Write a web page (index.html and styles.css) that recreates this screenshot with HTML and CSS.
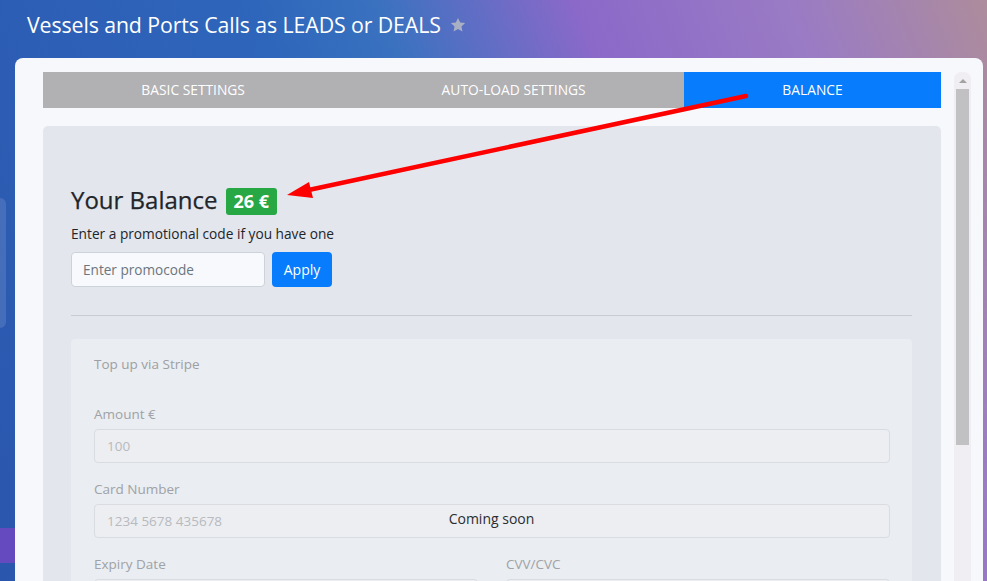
FILE: index.html
```html
<!DOCTYPE html>
<html lang="en">
<head>
<meta charset="utf-8">
<title>Balance</title>
<link rel="stylesheet" href="styles.css">
</head>
<body>
<div class="deco deco-box"></div>
<div class="deco deco-bar"></div>
<header class="page-head">
  <h1 class="page-title">Vessels and Ports Calls as LEADS or DEALS</h1>
  <svg class="star" width="18" height="18" viewBox="0 0 24 24"><path d="M12 2.5l2.9 6.1 6.6.8-4.9 4.6 1.3 6.6L12 17.3l-5.9 3.3 1.3-6.6-4.9-4.6 6.6-.8z" fill="#a9b0c4"/></svg>
</header>
<div class="panel">
  <div class="panel-main">
    <nav class="tabs">
      <div class="tab">Basic Settings</div>
      <div class="tab">Auto-load Settings</div>
      <div class="tab tab-active">Balance</div>
    </nav>
    <section class="balance-card">
      <h3 class="balance-title">Your Balance <span class="badge">26 €</span></h3>
      <p class="promo-hint">Enter a promotional code if you have one</p>
      <form class="promo-form">
        <input class="promo-input" type="text" placeholder="Enter promocode">
        <button class="btn-apply" type="button">Apply</button>
      </form>
      <hr class="divider">
      <div class="stripe-card">
        <div class="stripe-inner">
          <p class="stripe-title">Top up via Stripe</p>
          <div class="field">
            <label class="field-label">Amount €</label>
            <input class="field-input" type="text" placeholder="100" disabled>
          </div>
          <div class="field">
            <label class="field-label">Card Number</label>
            <input class="field-input" type="text" placeholder="1234 5678 435678" disabled>
          </div>
          <div class="field-row">
            <div class="field">
              <label class="field-label">Expiry Date</label>
              <input class="field-input" type="text" disabled>
            </div>
            <div class="field">
              <label class="field-label">CVV/CVC</label>
              <input class="field-input" type="text" disabled>
            </div>
          </div>
        </div>
        <div class="coming-soon">Coming soon</div>
      </div>
    </section>
  </div>
  <div class="scrollbar">
    <div class="scroll-up"><span class="scroll-arrow"></span></div>
    <div class="scroll-thumb"></div>
  </div>
</div>
<svg class="annotation" width="987" height="581" viewBox="0 0 987 581">
  <line x1="746" y1="96" x2="304" y2="191" stroke="#ff0000" stroke-width="4.5" stroke-linecap="round"/>
  <polygon points="287,195 313,198 309,182" fill="#ff0000"/>
</svg>
</body>
</html>
```

FILE: styles.css
```css
* { box-sizing: border-box; }

html, body {
  margin: 0;
  height: 581px;
  overflow: hidden;
}

body {
  font-family: "Open Sans", "Noto Sans", sans-serif;
  background: linear-gradient(68deg, #2b56ae 0%, #2e66bb 40%, #3a72c0 50%, #8a69c9 66%, #9a7bc4 84%, #ad8c9c 100%);
  position: relative;
}

.deco {
  position: absolute;
}

.deco-box {
  left: -12px;
  top: 198px;
  width: 18px;
  height: 130px;
  border-radius: 6px;
  background: rgba(255, 255, 255, 0.12);
}

.deco-bar {
  left: 0;
  top: 528px;
  width: 16px;
  height: 35px;
  background: #6549bf;
}

.page-head {
  height: 58px;
  display: flex;
  align-items: flex-start;
  gap: 8px;
  padding: 9px 0 0 27px;
}

.page-title {
  margin: 0;
  font-size: 21.3px;
  font-weight: 400;
  color: #ffffff;
  line-height: 32px;
  letter-spacing: -0.1px;
}

.star {
  margin-top: 7px;
}

.panel {
  position: relative;
  margin-left: 15px;
  width: 968px;
  height: 523px;
  background: #f7f8fc;
  border-radius: 8px 8px 0 0;
  padding: 14px 12px 0 28px;
  display: flex;
  gap: 13px;
  overflow: hidden;
}

.panel-main {
  width: 898px;
  flex: none;
}

.tabs {
  display: flex;
  height: 36px;
  background: #b1b0b3;
}

.tab {
  flex: 1 1 auto;
  text-align: center;
  line-height: 36px;
  font-size: 13.8px;
  color: #ffffff;
  text-transform: uppercase;
}

.tab-active {
  background: #077cfc;
}

.balance-card {
  margin-top: 18px;
  background: #e3e6ed;
  border-radius: 5px;
  padding: 58px 29px 40px 28px;
  height: 600px;
}

.balance-title {
  margin: 0;
  display: flex;
  align-items: center;
  gap: 8px;
  font-size: 24px;
  font-weight: 500;
  color: #212529;
  line-height: 32px;
  -webkit-text-stroke: 0.25px #212529;
}

.badge {
  display: inline-block;
  height: 27px;
  line-height: 27px;
  padding: 0 8px;
  border-radius: 3px;
  background: #28a745;
  color: #ffffff;
  font-size: 18px;
  font-weight: 700;
  margin-top: 2px;
  -webkit-text-stroke: 0;
}

.promo-hint {
  margin: 9px 0 0;
  font-size: 13.7px;
  line-height: 18px;
  color: #212529;
}

.promo-form {
  margin: 9px 0 0;
  display: flex;
  gap: 7px;
}

.promo-input {
  width: 194px;
  height: 35px;
  border: 1px solid #cdd3da;
  border-radius: 4px;
  background: #f7f9fc;
  padding: 0 11px;
  font-family: inherit;
  font-size: 13.6px;
  color: #495057;
}

.promo-input::placeholder {
  color: #6c757d;
}

.btn-apply {
  width: 60px;
  height: 35px;
  border: none;
  border-radius: 4px;
  background: #077cfc;
  color: #ffffff;
  font-family: inherit;
  font-size: 14px;
  padding: 0;
}

.divider {
  margin: 28px 0 0;
  border: none;
  border-top: 1px solid #c9ccd4;
}

.stripe-card {
  position: relative;
  margin-top: 23px;
  background: #eaedf1;
  border-radius: 4px;
  padding: 15px 22px 20px 23px;
}

.stripe-title {
  margin: 0 0 30px;
  font-size: 13.5px;
  line-height: 20px;
  color: #9d9fa3;
}

.field {
  margin-bottom: 16px;
}

.field-label {
  display: block;
  margin-bottom: 4px;
  font-size: 13.5px;
  line-height: 21px;
  color: #9fa2a6;
}

.field-input {
  display: block;
  width: 100%;
  height: 34px;
  border: 1px solid #d9dce1;
  border-radius: 4px;
  background: #eceef2;
  padding: 0 12px;
  font-family: inherit;
  font-size: 13.5px;
}

.field-input::placeholder {
  color: #b7babe;
}

.field-row {
  display: grid;
  grid-template-columns: 1fr 1fr;
  gap: 28px;
}

.coming-soon {
  position: absolute;
  left: 0;
  right: 0;
  top: 170px;
  text-align: center;
  font-size: 14px;
  line-height: 20px;
  color: #2b2d30;
}

.scrollbar {
  width: 17px;
  flex: none;
  background: #f0eef3;
  border-radius: 7px 7px 0 0;
  display: flex;
  flex-direction: column;
  align-items: center;
}

.scroll-up {
  height: 17px;
  width: 100%;
  display: flex;
  justify-content: center;
  align-items: center;
}

.scroll-arrow {
  width: 0;
  height: 0;
  border-left: 4px solid transparent;
  border-right: 4px solid transparent;
  border-bottom: 4px solid #a3a3a3;
}

.scroll-thumb {
  width: 13px;
  height: 356px;
  background: #c1c0c3;
}

.annotation {
  position: absolute;
  left: 0;
  top: 0;
  pointer-events: none;
}
```
